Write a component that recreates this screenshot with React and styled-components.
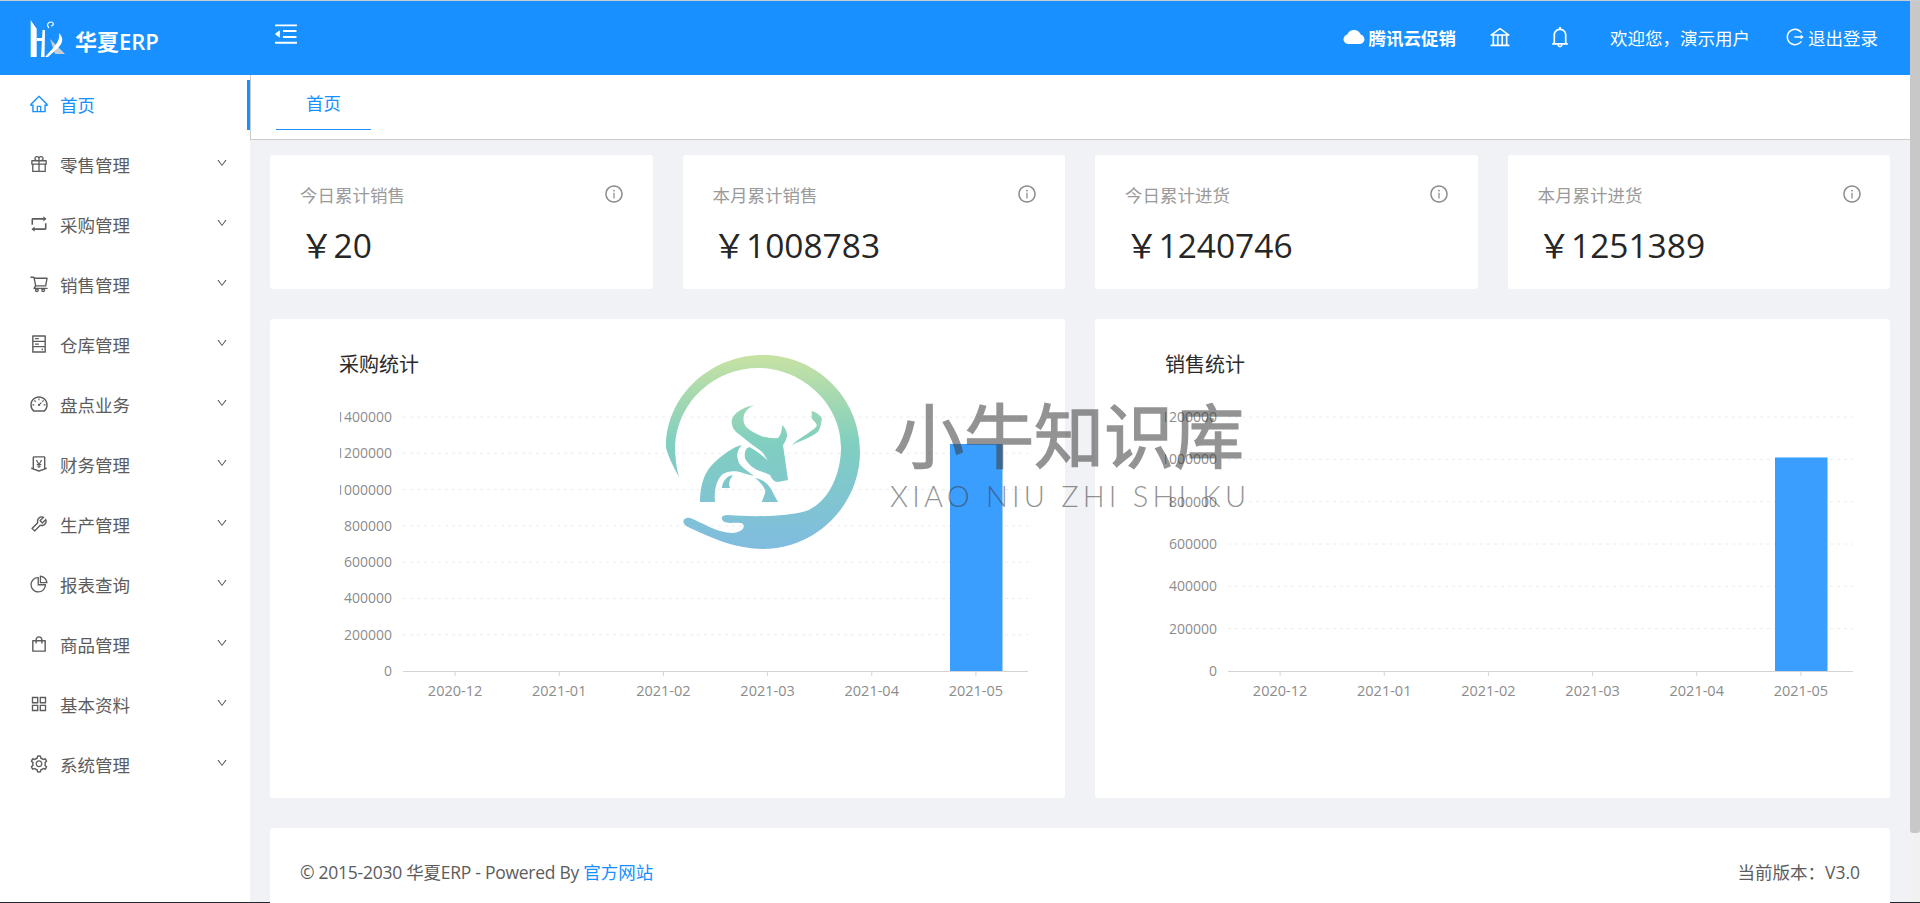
import React from 'react'
import styled, { createGlobalStyle } from 'styled-components'
import {
    AiOutlineHome,
    AiOutlineGift,
    AiOutlineRetweet,
    AiOutlineShoppingCart,
    AiOutlineHdd,
    AiOutlineDashboard,
    AiOutlineMoneyCollect,
    AiOutlineTool,
    AiOutlinePieChart,
    AiOutlineShopping,
    AiOutlineAppstore,
    AiOutlineSetting,
    AiOutlineDown,
    AiOutlineMenuFold,
    AiFillCloud,
    AiOutlineBank,
    AiOutlineBell,
    AiOutlineLogout,
    AiOutlineInfoCircle,
} from 'react-icons/ai'

const FONT = `"Open Sans", "Noto Sans CJK SC", sans-serif`
const BLUE = '#1890ff'

const GlobalStyle = createGlobalStyle`
    html, body {
        margin: 0;
        padding: 0;
        height: 100%;
        overflow: hidden;
        background: #fff;
        font-family: ${FONT};
    }
    * { box-sizing: border-box; }
`

const Page = styled.div`
    height: 903px;
    display: flex;
    flex-direction: column;
    overflow: hidden;
`
const TopEdge = styled.div`
    height: 1px;
    flex: none;
    background: #c9ccd0;
`
const BottomEdge = styled.div`
    height: 1px;
    flex: none;
    background: #23282e;
`
const Body = styled.div`
    flex: 1;
    min-height: 0;
    display: flex;
`
const Screen = styled.div`
    flex: 1;
    min-width: 0;
    display: flex;
    flex-direction: column;
    position: relative;
`
const ScrollTrack = styled.div`
    width: 10px;
    flex: none;
    background: #f1f1f1;
`
const ScrollThumb = styled.div`
    height: 832px;
    background: #c8c8c8;
    border-radius: 0 0 3px 3px;
`

// barra superiore
const Header = styled.header`
    height: 74px;
    flex: none;
    background: ${BLUE};
    color: #fff;
    display: flex;
    align-items: center;
`
const Brand = styled.div`
    width: 250px;
    flex: none;
    display: flex;
    align-items: center;
    gap: 9px;
    padding-left: 30px;
    margin-top: 3px;
`
const BrandName = styled.div`
    font-size: 22px;
    font-weight: 700;
    white-space: nowrap;
    > span {
        font-weight: 600;
    }
`
const FoldButton = styled.div`
    font-size: 28px;
    margin-left: 22px;
    margin-top: -8px;
    display: flex;
`
const HeaderRight = styled.div`
    margin-left: auto;
    padding-right: 32px;
    display: flex;
    align-items: center;
    font-size: 17.5px;
    margin-top: -2px;
`
const HeadItem = styled.div`
    display: flex;
    align-items: center;
    gap: ${props => props.$gap || 0}px;
    margin-left: ${props => props.$left || 0}px;
    font-weight: ${props => (props.$bold ? 700 : 400)};
    white-space: nowrap;
    > svg {
        font-size: ${props => props.$icon || 22}px;
        display: block;
    }
`

const Row = styled.div`
    flex: 1;
    min-height: 0;
    display: flex;
`

// menu laterale
const Sidebar = styled.nav`
    width: 250px;
    flex: none;
    background: #fff;
    padding-top: 5px;
    display: flex;
    flex-direction: column;
    gap: 10px;
`
const NavItem = styled.div`
    height: 50px;
    display: flex;
    align-items: center;
    padding: 0 19px 2px 29px;
    font-size: 17.5px;
    color: ${props => (props.$active ? BLUE : '#5c5c5c')};
    border-right: 3px solid ${props => (props.$active ? BLUE : 'transparent')};
`
const NavIcon = styled.span`
    width: 20px;
    font-size: 20px;
    margin-right: 11px;
    display: flex;
    > svg { display: block; }
`
const NavLabel = styled.span`
    flex: 1;
`
const NavArrow = styled.span`
    font-size: 12px;
    color: #555;
    display: flex;
    margin-top: -2px;
`

const Main = styled.main`
    flex: 1;
    min-width: 0;
    background: #f0f2f5;
    display: flex;
    flex-direction: column;
`
const TabBar = styled.div`
    height: 65px;
    flex: none;
    background: #fff;
    border-left: 1px solid #ccc;
    border-bottom: 1px solid #ccc;
    padding-left: 25px;
    padding-top: 5px;
`
const Tab = styled.div`
    width: 95px;
    height: 50px;
    line-height: 47px;
    text-align: center;
    font-size: 17.5px;
    color: ${BLUE};
    border-bottom: 1px solid ${BLUE};
`
const Content = styled.div`
    padding: 15px 20px 0;
    display: flex;
    flex-direction: column;
    gap: 30px;
`
const StatGrid = styled.div`
    display: grid;
    grid-template-columns: repeat(4, 1fr);
    gap: 30px;
`
const StatCard = styled.div`
    height: 134px;
    background: #fff;
    border-radius: 3px;
    padding: 28px 28.5px 0 30px;
`
const StatHead = styled.div`
    height: 24px;
    padding-bottom: 2px;
    display: flex;
    align-items: center;
    justify-content: space-between;
    font-size: 17.5px;
    color: #9a9a9a;
    > svg {
        font-size: 20px;
        color: #8c8c8c;
    }
`
const StatValue = styled.div`
    margin-top: 16px;
    font-size: 33.5px;
    line-height: 44px;
    color: #262626;
`
const ChartGrid = styled.div`
    display: grid;
    grid-template-columns: 1fr 1fr;
    gap: 30px;
`
const ChartCard = styled.div`
    height: 479px;
    background: #fff;
    border-radius: 3px;
    padding-top: 32px;
    overflow: hidden;
`
const ChartTitle = styled.div`
    margin-left: ${props => props.$left}px;
    font-size: 20px;
    line-height: 28px;
    color: #2b2b2b;
`
const ChartSvg = styled.svg`
    display: block;
    width: 795px;
    height: 400px;
    font-family: ${FONT};
    font-size: 14.5px;
    > g > text.value {
        font-size: 14px;
    }
`
const Footer = styled.footer`
    height: 90px;
    background: #fff;
    border-radius: 3px;
    padding: 30px 30px 0;
    display: flex;
    justify-content: space-between;
    font-size: 17.5px;
    line-height: 28px;
    color: #5c5c5c;
    > div > a {
        color: ${BLUE};
        text-decoration: none;
    }
`
const FooterCopy = styled.span`
    letter-spacing: -0.26px;
`

// filigrana sopra la pagina
const Watermark = styled.div`
    position: absolute;
    left: 666px;
    top: 354px;
    display: flex;
    align-items: center;
    gap: 30px;
    pointer-events: none;
`
const WaterText = styled.div`
    display: flex;
    flex-direction: column;
    align-items: flex-start;
    gap: 9px;
    margin-top: 2px;
    color: #3c3c3c;
    opacity: 0.55;
`
const WaterBig = styled.div`
    font-family: "Noto Sans CJK SC", sans-serif;
    font-size: 70px;
    line-height: 76px;
    -webkit-text-stroke: 1.4px #3c3c3c;
    white-space: nowrap;
    margin-left: 4px;
`
const WaterSmall = styled.div`
    font-family: Lato, sans-serif;
    font-weight: 300;
    font-size: 29px;
    line-height: 32px;
    letter-spacing: 4.2px;
    white-space: nowrap;
`

const menu = [
    { label: '首页', icon: AiOutlineHome, active: true },
    { label: '零售管理', icon: AiOutlineGift },
    { label: '采购管理', icon: AiOutlineRetweet },
    { label: '销售管理', icon: AiOutlineShoppingCart },
    { label: '仓库管理', icon: AiOutlineHdd },
    { label: '盘点业务', icon: AiOutlineDashboard },
    { label: '财务管理', icon: AiOutlineMoneyCollect },
    { label: '生产管理', icon: AiOutlineTool },
    { label: '报表查询', icon: AiOutlinePieChart },
    { label: '商品管理', icon: AiOutlineShopping },
    { label: '基本资料', icon: AiOutlineAppstore },
    { label: '系统管理', icon: AiOutlineSetting },
]

const stats = [
    { title: '今日累计销售', value: '￥20' },
    { title: '本月累计销售', value: '￥1008783' },
    { title: '今日累计进货', value: '￥1240746' },
    { title: '本月累计进货', value: '￥1251389' },
]

const months = ['2020-12', '2021-01', '2021-02', '2021-03', '2021-04', '2021-05']

const Logo = () => (
    <svg width="36" height="40" viewBox="0 0 36 40">
        <path d="M0.7 0.3 L6.7 8.7 V37 H0.7 Z" fill="#fff" />
        <path d="M6.7 18 H13 V21 H6.7 Z" fill="#fff" />
        <path d="M12.5 10 H15 L14.5 37 H11 Z" fill="#fff" />
        <path d="M20 19 L35 34 H25 Z" fill="#c9cdd2" />
        <path d="M29 13 C33 17 34 22 28 28 L18 37 H15 L24 27 C28 22 30 18 29 13 Z" fill="#fff" />
        <path d="M19 8 C16 5 18 2 21 2 C24 2 24 6 21 6" fill="none" stroke="#fff" strokeWidth="1.2" />
    </svg>
)

const Bull = () => (
    <svg width="194" height="195" viewBox="0 0 194 195">
        <defs>
            <linearGradient id="ring" x1="0" y1="0" x2="0" y2="194" gradientUnits="userSpaceOnUse">
                <stop offset="0" stopColor="#c8e2a2" />
                <stop offset="0.45" stopColor="#80cfc0" />
                <stop offset="1" stopColor="#80bcdf" />
            </linearGradient>
        </defs>
        <g fill="url(#ring)">
            <path d="M13 122 C5 108 0 95 0 92 C0 40 45 0 97 0 C150 0 194 42 194 97 C194 150 150 194 97 194 C70 194 45 183 22 172 C16 169 16 164 21 163 C25 162 28 165 33 167 C42 171 52 177 66 178 C73 178 80 174 77 169 C72 166 62 170 57 166 C54 162 57 160 62 160 C85 162 120 162 140 156 C162 148 175 120 175 92 C175 48 135 13 92 13 C50 13 12 45 9 90 C9 100 10 112 13 122 Z" />
            <path d="M88 50 C78 52 66 58 65.7 67 C66 74 70 77 74 80 L84 88 C88 91 94 95 97 98 L102 105.7 C97 101 92 97 84 92.3 C80 92 78 97 79 103 C82 110 88 113 91 115 C96 117 100 118 104 120 C106 124 108 127 112 127 L122 125 L117 90 C120 86 122 80 120.7 78 C120 74 118 72 116 70 C116 75 115 80 112 83 C106 84 102 82 97 81.7 C88 78 80 74 78 68 C76 60 80 54 88 50 Z" />
            <path d="M75.7 90 C66 92 50 104 42 115 C36 124 34 136 34 147 H49 C48 136 50 126 55.7 120 C60 116 70 115 77 118 C80 119 84 120 88 121 C82 116 75 112 73 108 C70 100 71 96 75.7 90 Z" />
            <path d="M89 123 C96 124 102 128 105.7 135 C108 140 110 143 112 147 H95.7 C97 143 100 138 99 135 C97 130 93 126 89 123 Z" />
            <path d="M67 120 C61 121 57 125 55.7 133 H64 C62 128 64 124 67 120 Z" />
            <path d="M145.7 55.7 C152 58 157 62 155.7 65 C155 70 154 74 152 76.7 C146 82 134 86 125.7 90 C132 84 140 80 144 76.7 C148 74 151 72 150.7 70 C150 67 147 66 145.7 63 Z" />
        </g>
    </svg>
)

const Chart = ({ max, value }) => {
    const top = 38
    const bottom = 292
    const left = 133
    const right = 758
    const step = 200000
    const ticks = []
    for (let tick = 0; tick <= max; tick += step) ticks.push(tick)
    const toY = val => bottom - (val / max) * (bottom - top)
    const band = (right - left) / months.length
    const clipId = `clip${max}`

    return (
        <ChartSvg viewBox="0 0 795 400">
            <defs>
                <clipPath id={clipId}>
                    <rect x="70" y="0" width="725" height="400" />
                </clipPath>
            </defs>
            {ticks.map(tick => (
                <g key={tick}>
                    {tick > 0 && (
                        <line x1={left} x2={right} y1={toY(tick)} y2={toY(tick)} stroke="#ececec" strokeDasharray="3 4" />
                    )}
                    <text className="value" x="122" y={toY(tick) + 5} textAnchor="end" fill="#8c8c8c" clipPath={`url(#${clipId})`}>
                        {tick}
                    </text>
                </g>
            ))}
            <rect x="680" y={toY(value)} width="52.5" height={bottom - toY(value)} fill="#3a9eff" />
            <line x1={left} x2={right} y1={bottom + 0.5} y2={bottom + 0.5} stroke="#d4d4d4" />
            {months.map((month, index) => {
                const x = left + band * (index + 0.5)
                return (
                    <g key={month}>
                        <line x1={x} x2={x} y1={bottom} y2={bottom + 5} stroke="#d4d4d4" />
                        <text x={x} y={bottom + 25} textAnchor="middle" fill="#8c8c8c">
                            {month}
                        </text>
                    </g>
                )
            })}
        </ChartSvg>
    )
}

const App = () => {
    return (
        <Page>
            <GlobalStyle />
            <TopEdge />
            <Body>
                <Screen>
                    <Header>
                        <Brand>
                            <Logo />
                            <BrandName>华夏<span>ERP</span></BrandName>
                        </Brand>
                        <FoldButton><AiOutlineMenuFold /></FoldButton>
                        <HeaderRight>
                            <HeadItem $bold $gap={3} $icon={24}><AiFillCloud />腾讯云促销</HeadItem>
                            <HeadItem $left={32} $icon={24}><AiOutlineBank /></HeadItem>
                            <HeadItem $left={36} $icon={24}><AiOutlineBell /></HeadItem>
                            <HeadItem $left={38}>欢迎您，演示用户</HeadItem>
                            <HeadItem $left={35} $gap={3} $icon={20}><AiOutlineLogout />退出登录</HeadItem>
                        </HeaderRight>
                    </Header>
                    <Row>
                        <Sidebar>
                            {menu.map(item => (
                                <NavItem key={item.label} $active={item.active}>
                                    <NavIcon><item.icon /></NavIcon>
                                    <NavLabel>{item.label}</NavLabel>
                                    {!item.active && <NavArrow><AiOutlineDown /></NavArrow>}
                                </NavItem>
                            ))}
                        </Sidebar>
                        <Main>
                            <TabBar><Tab>首页</Tab></TabBar>
                            <Content>
                                <StatGrid>
                                    {stats.map(stat => (
                                        <StatCard key={stat.title}>
                                            <StatHead>{stat.title}<AiOutlineInfoCircle /></StatHead>
                                            <StatValue>{stat.value}</StatValue>
                                        </StatCard>
                                    ))}
                                </StatGrid>
                                <ChartGrid>
                                    <ChartCard>
                                        <ChartTitle $left={69}>采购统计</ChartTitle>
                                        <Chart max={1400000} value={1251389} />
                                    </ChartCard>
                                    <ChartCard>
                                        <ChartTitle $left={70}>销售统计</ChartTitle>
                                        <Chart max={1200000} value={1008783} />
                                    </ChartCard>
                                </ChartGrid>
                                <Footer>
                                    <div><FooterCopy>© 2015-2030 华夏ERP - Powered By </FooterCopy><a href="#">官方网站</a></div>
                                    <div>当前版本：V3.0</div>
                                </Footer>
                            </Content>
                        </Main>
                    </Row>
                    <Watermark>
                        <Bull />
                        <WaterText>
                            <WaterBig>小牛知识库</WaterBig>
                            <WaterSmall>XIAO NIU ZHI SHI KU</WaterSmall>
                        </WaterText>
                    </Watermark>
                </Screen>
                <ScrollTrack><ScrollThumb /></ScrollTrack>
            </Body>
            <BottomEdge />
        </Page>
    )
}

export default App
